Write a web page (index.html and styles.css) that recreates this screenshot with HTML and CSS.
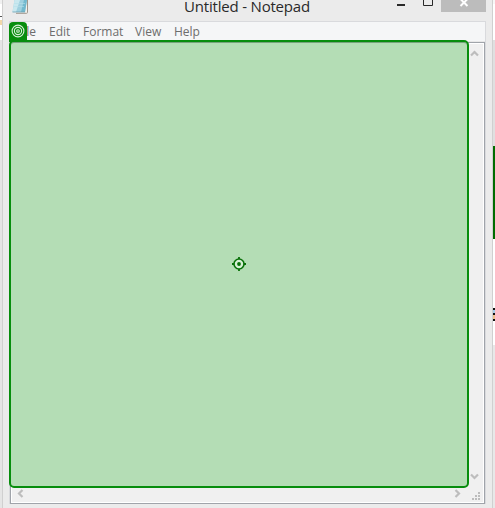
FILE: index.html
```
<!DOCTYPE html>
<html lang="en">
<head>
<meta charset="utf-8">
<title>Untitled - Notepad</title>
<link rel="stylesheet" href="styles.css">
</head>
<body>
<div class="desktop">
  <div class="behind-left"><i class="mark"></i></div>
  <main class="window">
    <header class="titlebar">
      <svg class="app-icon" width="18" height="14" viewBox="0 0 18 14">
        <path d="M5 0H15.500V13H4Z" fill="#f3f1ec"/>
        <path d="M15.500 0V12.500Q15.500 13.300 14.500 13.300H4" fill="none" stroke="#a0978c"/>
        <path d="M2.500 0H15L13 12H0.500Z" fill="#9ed0df"/>
        <path d="M2.500 0H8L4 12H0.500Z" fill="#c9e8ef"/>
        <path d="M12 0H15L13 12H9Z" fill="#72b9ce"/>
        <path d="M2 3.500H13M2 6.500H12" stroke="#b6dfe9" stroke-width=".6"/>
        <path d="M.500 12H13" stroke="#69a0b1" stroke-width=".8"/>
      </svg>
      <h1 class="title">Untitled - Notepad</h1>
      <div class="controls">
        <svg width="50" height="12" viewBox="0 0 50 12">
          <path d="M6 5H14" stroke="#292929" stroke-width="2"/>
          <path d="M32.500 0V5.500H41.500V0" fill="none" stroke="#292929"/>
        </svg>
        <div class="close"><svg width="10" height="7" viewBox="0 0 10 7"><path d="M1.500 -1L8.500 6M8.500 -1L1.500 6" stroke="#fff" stroke-width="2"/></svg></div>
      </div>
    </header>
    <section class="client">
      <nav class="menu">
        <span class="file">File</span><span class="edit">Edit</span><span class="format">Format</span><span class="view">View</span><span class="help">Help</span>
      </nav>
      <div class="editor">
        <div class="page"></div>
        <div class="vscroll">
          <svg width="9" height="7" viewBox="0 0 9 7"><path d="M1 5.500L4.500 2L8 5.500"/></svg>
          <svg width="9" height="7" viewBox="0 0 9 7"><path d="M1 1.500L4.500 5L8 1.500"/></svg>
        </div>
        <div class="hscroll">
          <svg width="7" height="9" viewBox="0 0 7 9"><path d="M5.500 1L2 4.500L5.500 8"/></svg>
          <svg width="7" height="9" viewBox="0 0 7 9"><path d="M1.500 1L5 4.500L1.500 8"/></svg>
        </div>
        <div class="grip"><svg width="8" height="8" viewBox="0 0 8 8"><path d="M6 0h2v2h-2zM3 3h2v2h-2zM6 3h2v2h-2zM0 6h2v2h-2zM3 6h2v2h-2zM6 6h2v2h-2z" fill="#bcbcbc"/></svg></div>
      </div>
    </section>
  </main>
  <div class="behind-right"><i class="green"></i><i class="letter"></i></div>
  <div class="highlight">
    <svg width="14" height="14" viewBox="0 0 14 14">
      <circle cx="7" cy="7" r="5" fill="#d6f0d5" stroke="#087008" stroke-width="1.600"/>
      <circle cx="7" cy="7" r="1.900" fill="#087008"/>
      <path d="M7 0V2M7 12V14M0 7H2M12 7H14" stroke="#087008" stroke-width="1.800"/>
    </svg>
  </div>
  <div class="badge">
    <svg width="14" height="14" viewBox="0 0 14 14" fill="none" stroke="#d8efd8" stroke-width="1.100">
      <circle cx="7" cy="7" r="5.900"/><circle cx="7" cy="7" r="3.600"/><circle cx="7" cy="7" r="1.300"/>
    </svg>
  </div>
</div>
</body>
</html>
```

FILE: styles.css
```
* { box-sizing: border-box; }
body { margin: 0; overflow: hidden; }
svg { display: block; }
.desktop {
  position: relative;
  width: 495px;
  height: 508px;
  display: grid;
  grid-template-columns: 2px 491px 2px;
  overflow: hidden;
  font-family: "Open Sans", "Noto Sans", sans-serif;
}
.behind-left { padding-top: 16px; background: linear-gradient(#f0f0f0 0 4px, #fff 4px 40px, #e5e5e5 40px); }
.mark { display: block; height: 9px; background: linear-gradient(#555 0 1px, #fff 1px 4px, #f2d8a9 4px); }
.behind-right {
  padding-top: 146px;
  background: linear-gradient(#f7f7f7 0 4px, #fff 4px 40px, #e0e0e0 40px 146px, #fff 146px 345px, #e8e8e8 345px);
}
.green { display: block; height: 93px; background: #006c00; }
.letter {
  display: block;
  height: 13px;
  margin-top: 69px;
  background: linear-gradient(#111 0 2px, #a9cfe9 2px 5px, #111 5px 7px, #f1c18c 7px 11px, #111 11px);
}
.window {
  display: flex;
  flex-direction: column;
  height: 508px;
  padding: 0 7px 0 6px;
  background: #ebebeb;
  border: solid #d0d0d0;
  border-width: 0 1px;
}
.titlebar { display: grid; grid-template-columns: 175px 1fr auto; height: 21px; }
.app-icon { margin-left: 3px; }
.title {
  margin: 0;
  font-size: 15px;
  font-weight: 400;
  line-height: 13px;
  letter-spacing: -.19px;
  color: #292929;
  white-space: nowrap;
}
.controls { display: flex; margin-right: -1px; }
.close {
  display: flex;
  justify-content: center;
  width: 45px;
  height: 12px;
  background: #bcbcbc;
}
.client {
  width: 477px;
  border: 1px solid #d9dadd;
  border-bottom: 0;
  height: 483px;
}
.menu {
  display: flex;
  height: 20px;
  background: #f5f6f7;
  border-bottom: 1px solid #e8e8e8;
  font-size: 12px;
  line-height: 20px;
  color: #6d6d6d;
  padding-left: 7px;
}
.menu span { white-space: nowrap; }
.file { width: 32px; }
.edit { width: 34px; }
.format { width: 52px; }
.view { width: 39px; }
.editor {
  display: grid;
  grid-template: 444px 1fr / 456px 1fr;
  height: 462px;
  border: 1px solid #a0a4aa;
  box-shadow: inset 0 0 0 1px #fff;
}
.page { background: #fff; }
.vscroll, .hscroll { display: flex; justify-content: space-between; background: #f0f0f0; }
.vscroll { flex-direction: column; padding: 6px 0 7px 3px; margin: 1px 1px 0 0; }
.vscroll path, .hscroll path { fill: none; stroke: #bdbdbd; stroke-width: 2.2; }
.hscroll { padding: 2px 6px 0 5px; margin: 0 0 1px 1px; }
.grip { padding: 5px 0 0 5px; margin: 0 1px 1px 0; background: #f0f0f0; }
.highlight {
  position: absolute;
  left: 9px;
  top: 40px;
  width: 460px;
  height: 448px;
  display: grid;
  place-items: center;
  background: #b4ddb5;
  border: 2px solid #078d0d;
  border-radius: 5px;
  box-shadow: inset 0 1px #78a27d;
}
.badge {
  position: absolute;
  left: 9px;
  top: 22px;
  width: 18px;
  height: 20px;
  padding: 2px;
  background: #078d0d;
  border-radius: 4px 4px 0 0;
}
```
